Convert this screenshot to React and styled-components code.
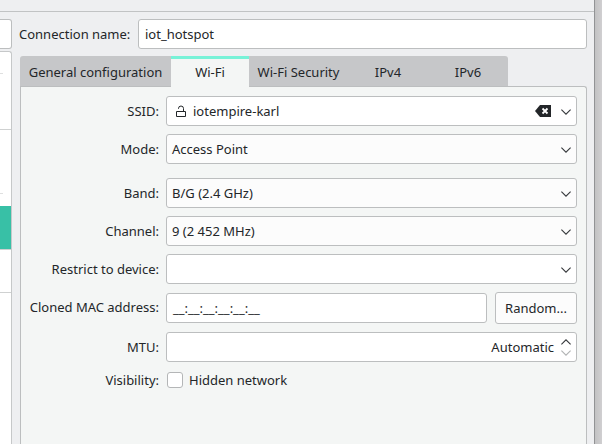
import React from "react";
import styled, { createGlobalStyle } from "styled-components";

const line = "#bcbebf";

const GlobalStyle = createGlobalStyle`
  * { box-sizing: border-box; }
  body {
    margin: 0;
    overflow: hidden;
    background: #eff0f1;
    color: #232629;
    font: 13px/18px "Noto Sans", sans-serif;
  }
`;

const Desktop = styled.div`
  display: flex;
  width: 602px;
  height: 444px;
  overflow: hidden;
`;

const Dialog = styled.div`
  display: flex;
  flex-direction: column;
  width: 595px;
  border-right: 1px solid #929395;
  background: #eeeff1;
`;

const Shadow = styled.div`
  flex: 1;
  background: linear-gradient(90deg, #c2c2c3, #d0cfd1);
`;

const Toolbar = styled.div`
  flex: none;
  height: 12px;
  border-bottom: 1px solid #c1c3c4;
`;

const Content = styled.div`
  flex: 1;
  display: flex;
  min-height: 0;
`;

const Sidebar = styled.div`
  display: flex;
  flex-direction: column;
  gap: 2px;
  width: 12px;
  padding-top: 7px;
`;

const Search = styled.div`
  flex: none;
  height: 30px;
  border: 1px solid ${line};
  border-left: 0;
  border-radius: 0 3px 3px 0;
  background: #fff;
`;

const ConnectionList = styled.div`
  flex: 1;
  border: 1px solid #c6c8c9;
  border-width: 1px 1px 0 0;
  border-radius: 0 3px 0 0;
  background: #fff;
`;

const Entry = styled.div`
  height: ${(p) => p.$height}px;
  width: ${(p) => (p.$short ? "3px" : "100%")};
  margin-bottom: ${(p) => p.$after ?? 0}px;
  border-bottom: 1px solid ${(p) => (p.$short ? "#dfe0e0" : "#cfd1d1")};
  background: ${(p) => (p.$selected ? "#38c0a6" : "transparent")};
`;

const Editor = styled.div`
  flex: 1;
  display: flex;
  flex-direction: column;
  padding: 7px 7px 0 8px;
`;

const NameRow = styled.div`
  display: grid;
  grid-template-columns: 111px 449px;
  column-gap: 8px;
  align-items: center;
  margin-left: -1px;
  height: 30px;
`;

const Label = styled.label`
  text-align: right;
  white-space: nowrap;
`;

const Field = styled.div`
  display: flex;
  align-items: center;
  width: ${(p) => (p.$width ? `${p.$width}px` : "100%")};
  height: 30px;
  padding: 0 5px 0 ${(p) => p.$inset ?? 5}px;
  border: 1px solid ${line};
  border-radius: 3px;
  background: ${(p) => (p.$button ? "#fcfcfc" : "#fff")};
  white-space: pre;
`;

const Value = styled.span`
  flex: 1;
  text-align: ${(p) => (p.$end ? "right" : "left")};
`;

const Tabs = styled.div`
  display: flex;
  flex: none;
  height: 31px;
  margin: 7px 0 -1px;
  z-index: 1;
`;

const Tab = styled.div`
  width: ${(p) => p.$width}px;
  height: 31px;
  padding-top: ${(p) => (p.$active ? 4 : 7)}px;
  border-top: ${(p) => (p.$active ? "3px solid #78f2d8" : "0")};
  border-bottom: ${(p) => (p.$active ? "0" : `1px solid ${line}`)};
  background: ${(p) => (p.$active ? "#f4f6f5" : "#c6c7c9")};
  text-align: center;
  white-space: nowrap;
  &:first-child { border-top-left-radius: 3px; }
  &:last-child { border-top-right-radius: 3px; }
`;

const Pane = styled.div`
  flex: 1;
  padding: 9px 9px 0 0;
  border: 1px solid ${line};
  border-bottom: 0;
  border-radius: 0 3px 0 0;
  background: #f4f6f5;
`;

const Row = styled.div`
  display: grid;
  grid-template-columns: 138px 411px;
  column-gap: 7px;
  align-items: center;
  margin-bottom: ${(p) => p.$gap ?? 8}px;
`;

const RaisedLabel = styled(Label)`
  margin-bottom: 2px;
`;

const MacGroup = styled.div`
  display: flex;
  align-items: center;
  gap: 8px;
`;

const Button = styled.button`
  width: 82px;
  height: 32px;
  padding: 0;
  border: 1px solid ${line};
  border-radius: 3px;
  background: #fcfcfc;
  color: inherit;
  font: inherit;
`;

const CheckRow = styled.div`
  display: flex;
  align-items: center;
  gap: 6px;
  padding-left: 1px;
`;

const Checkbox = styled.div`
  width: 16px;
  height: 16px;
  border: 1px solid #b4b6b7;
  border-radius: 3px;
  background: #fff;
`;

const Glyph = styled.svg`
  display: block;
  flex: none;
  margin-top: ${(p) => p.$drop ?? 0}px;
  margin-right: ${(p) => p.$after ?? 0}px;
`;

const Spinner = styled.div`
  display: flex;
  flex-direction: column;
  gap: 5px;
  margin-left: 7px;
`;

function Chevron({ up, faded, drop }) {
  return (
    <Glyph
      $drop={drop}
      width="10"
      height="6"
      viewBox="0 0 10 6"
      fill="none"
      stroke={faded ? "#b0b2b3" : "#35383b"}
      strokeWidth="1.1"
    >
      <path d={up ? "M.4 5.4 5 .8l4.6 4.6" : "M.4.6 5 5.2 9.6.6"} />
    </Glyph>
  );
}

function Lock() {
  return (
    <Glyph $drop={2} $after={6} width="12" height="14" viewBox="0 0 12 14" fill="none" stroke="#232629">
      <path d="M1.5 6.5h9v5h-9zM3.5 4V3.5a2.5 2.5 0 0 1 5 0v3" />
    </Glyph>
  );
}

function Clear() {
  return (
    <Glyph $after={10} width="16" height="12" viewBox="0 0 16 12">
      <path d="M0 6 5 0h11v12H5z" fill="#232629" />
      <path d="m7.5 3.5 5 5m0-5-5 5" stroke="#fff" strokeWidth="1.8" />
    </Glyph>
  );
}

function Combo({ label, value, gap, plain }) {
  return (
    <Row $gap={gap}>
      <Label>{label}</Label>
      <Field $button={!plain}>
        <Value>{value}</Value>
        <Chevron drop={2} />
      </Field>
    </Row>
  );
}

export default function App() {
  return (
    <Desktop>
      <GlobalStyle />
      <Dialog>
        <Toolbar />
        <Content>
          <Sidebar>
            <Search />
            <ConnectionList>
              <Entry $height={22} $short />
              <Entry $height={56} />
              <Entry $height={64} $short $after={12} />
              <Entry $height={44} $selected />
              <Entry $height={43} />
            </ConnectionList>
          </Sidebar>
          <Editor>
            <NameRow>
              <Label>Connection name:</Label>
              <Field $inset={6}>iot_hotspot</Field>
            </NameRow>
            <Tabs>
              <Tab $width={151}>General configuration</Tab>
              <Tab $width={78} $active>Wi-Fi</Tab>
              <Tab $width={99}>Wi-Fi Security</Tab>
              <Tab $width={80}>IPv4</Tab>
              <Tab $width={80}>IPv6</Tab>
            </Tabs>
            <Pane>
              <Row>
                <Label>SSID:</Label>
                <Field $inset={8}>
                  <Lock />
                  <Value>iotempire-karl</Value>
                  <Clear />
                  <Chevron drop={2} />
                </Field>
              </Row>
              <Combo label="Mode:" value="Access Point" gap={14} />
              <Combo label="Band:" value="B/G (2.4 GHz)" />
              <Combo label="Channel:" value="9 (2 452 MHz)" />
              <Combo label="Restrict to device:" value="" plain />
              <Row>
                <RaisedLabel>Cloned MAC address:</RaisedLabel>
                <MacGroup>
                  <Field $width={321} $inset={6}>
                    <Value>__:__:__:__:__:__</Value>
                  </Field>
                  <Button>Random...</Button>
                </MacGroup>
              </Row>
              <Row $gap={9}>
                <Label>MTU:</Label>
                <Field>
                  <Value $end>Automatic</Value>
                  <Spinner>
                    <Chevron up />
                    <Chevron faded />
                  </Spinner>
                </Field>
              </Row>
              <Row>
                <Label>Visibility:</Label>
                <CheckRow>
                  <Checkbox />
                  Hidden network
                </CheckRow>
              </Row>
            </Pane>
          </Editor>
        </Content>
      </Dialog>
      <Shadow />
    </Desktop>
  );
}
